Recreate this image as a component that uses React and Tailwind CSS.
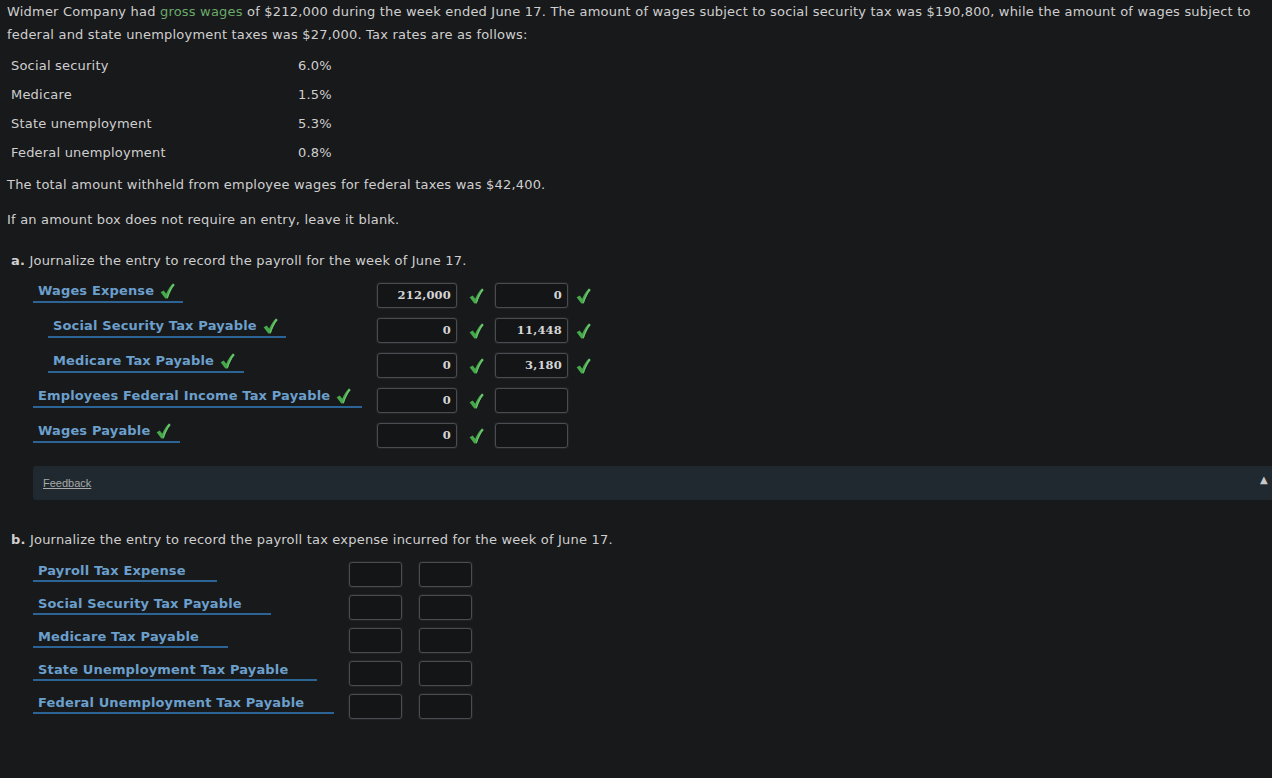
import { Fragment } from 'react';

const rates = [
  ['Social security', '6.0%'],
  ['Medicare', '1.5%'],
  ['State unemployment', '5.3%'],
  ['Federal unemployment', '0.8%'],
];

// part a rows: label, indent, underline width, debit, credit
const partA = [
  { label: 'Wages Expense', indent: false, w: 'w-[150px]', dr: '212,000', cr: '0' },
  { label: 'Social Security Tax Payable', indent: true, w: 'w-[238px]', dr: '0', cr: '11,448' },
  { label: 'Medicare Tax Payable', indent: true, w: 'w-[196px]', dr: '0', cr: '3,180' },
  { label: 'Employees Federal Income Tax Payable', indent: false, w: 'w-[329px]', dr: '0', cr: null },
  { label: 'Wages Payable', indent: false, w: 'w-[147px]', dr: '0', cr: null },
];

const partB = [
  { label: 'Payroll Tax Expense', w: 'w-[184px]' },
  { label: 'Social Security Tax Payable', w: 'w-[238px]' },
  { label: 'Medicare Tax Payable', w: 'w-[195px]' },
  { label: 'State Unemployment Tax Payable', w: 'w-[284px]' },
  { label: 'Federal Unemployment Tax Payable', w: 'w-[301px]' },
];

function Check() {
  return (
    <svg viewBox="0 0 15 16" className="h-[16px] w-[15px]">
      <path d="M0.6 9.2 L3.8 7.4 L6.2 10.8 C8 6.6 10.2 3.2 13 0.6 L14.6 2 C11.8 5.2 9.6 9.6 7.8 15.2 L5.3 15.4 Z" fill="#46a84a" />
      <path d="M13 0.6 L14.6 2 C11.8 5.2 9.6 9.6 7.8 15.2 L6.7 15.2 C8.5 9.2 10.6 4.6 13 0.6 Z" fill="#6cc46e" />
    </svg>
  );
}

function Amount({ value, w }) {
  return (
    <div className={`${w} h-[25px] rounded-[3px] border border-[#4a4c50] bg-[#141517] flex items-center justify-end pr-[5px] text-[11.5px] font-bold text-[#d4d4d4] [font-family:'DejaVu_Serif',serif] shadow-[0_0_0_1px_#222326]`}>
      {value}
    </div>
  );
}

export default function App() {
  return (
    <div className="min-h-[778px] w-[1272px] bg-[#18191b] text-[#cfcfcf] text-[13px] tracking-[0.2px] [font-family:'DejaVu_Sans',sans-serif]">
      <p className="pl-[7px] pr-[10px] leading-[23px]">
        Widmer Company had <span className="text-[#6aa96a]">gross wages</span> of $212,000 during the week ended June 17. The amount of wages subject to social security tax was $190,800, while the amount of wages subject to federal and state unemployment taxes was $27,000. Tax rates are as follows:
      </p>

      <div className="mt-[5px] pl-[11px] grid grid-cols-[287px_auto] w-fit">
        {rates.map(([k, v]) => (
          <Fragment key={k}>
            <div className="h-[29px] leading-[29px]">{k}</div>
            <div className="h-[29px] leading-[29px]">{v}</div>
          </Fragment>
        ))}
      </div>

      <p className="pl-[7px] mt-[6px] leading-[23px]">The total amount withheld from employee wages for federal taxes was $42,400.</p>
      <p className="pl-[7px] mt-[12px] leading-[23px]">If an amount box does not require an entry, leave it blank.</p>

      <p className="pl-[11px] mt-[18px] leading-[23px]">
        <span className="font-bold">a.</span> Journalize the entry to record the payroll for the week of June 17.
      </p>

      <div className="pl-[33px] mt-[11px] flex flex-col gap-[10px]">
        {partA.map((r) => (
          <div key={r.label} className="flex items-start h-[25px]">
            <div className="w-[344px]">
              <div className={`${r.indent ? 'ml-[15px]' : ''} ${r.w} h-[20px] border-b-2 border-[#2d6496] pl-[5px] flex items-start gap-[6px] text-[#6b9fcc] font-bold leading-[15px] tracking-[0.15px]`}>
                <span>{r.label}</span>
                <Check />
              </div>
            </div>
            <Amount value={r.dr} w="w-[80px]" />
            <div className="w-[38px] h-[25px] flex items-center justify-center"><Check /></div>
            <Amount value={r.cr} w="w-[73px]" />
            <div className="w-[30px] h-[25px] flex items-center justify-center">{r.cr !== null && <Check />}</div>
          </div>
        ))}
      </div>

      <div className="ml-[33px] mt-[18px] h-[34px] bg-[#1f292f] rounded-l-[3px] flex items-center justify-between pl-[10px] pr-[4px]">
        <span className="text-[11px] tracking-normal underline text-[#a9a9a9] [font-family:'Liberation_Sans',sans-serif]">Feedback</span>
        <span className="text-[#c8c8c8] text-[10px] mb-[8px]">▲</span>
      </div>

      <p className="pl-[11px] mt-[28px] leading-[23px]">
        <span className="font-bold">b.</span> Journalize the entry to record the payroll tax expense incurred for the week of June 17.
      </p>

      <div className="pl-[33px] mt-[11px] flex flex-col gap-[8px]">
        {partB.map((r) => (
          <div key={r.label} className="flex items-start h-[25px]">
            <div className="w-[316px]">
              <div className={`${r.w} h-[20px] border-b-2 border-[#2d6496] pl-[5px] pt-[1px] text-[#6b9fcc] font-bold leading-[16px] tracking-[0.15px]`}>
                {r.label}
              </div>
            </div>
            <Amount value="" w="w-[53px]" />
            <div className="w-[17px]" />
            <Amount value="" w="w-[53px]" />
          </div>
        ))}
      </div>
    </div>
  );
}
